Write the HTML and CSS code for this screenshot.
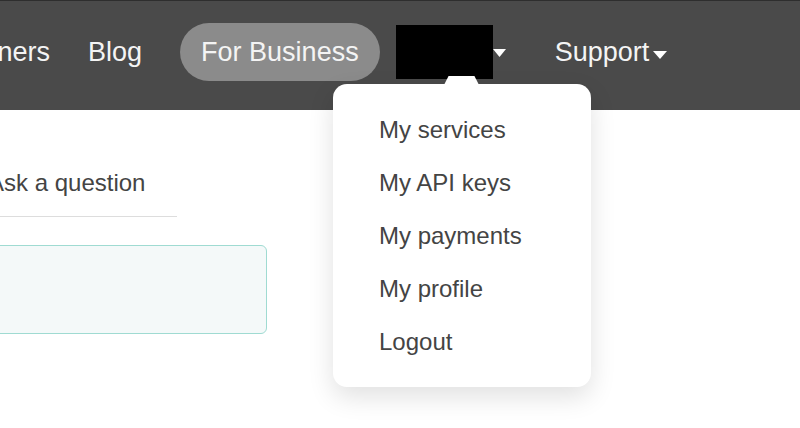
FILE: index.html
```html
<!DOCTYPE html>
<html lang="en">
<head>
  <meta charset="UTF-8">
  <meta name="viewport" content="width=device-width, initial-scale=1.0">
  <title>Account menu</title>
  <link rel="stylesheet" href="styles.css">
</head>
<body>

  <!-- Barra de navegación -->
  <header class="topbar">
    <nav class="nav">
      <a class="nav-link" href="#">Partners</a>
      <a class="nav-link" href="#">Blog</a>
      <a class="nav-pill" href="#">For Business</a>
      <a class="nav-user" href="#">
        <span class="user-name"></span>
        <svg class="caret" width="13" height="9" viewBox="0 0 13 9"><path d="M0 0 H13 L6.5 8 Z" fill="#fff"/></svg>
      </a>
      <a class="nav-link nav-support" href="#">Support<svg class="caret" width="14" height="9" viewBox="0 0 14 9"><path d="M0 0 H14 L7 8 Z" fill="#fff"/></svg></a>
    </nav>
  </header>

  <!-- Contenido -->
  <main class="content">
    <div class="tab">Ask a question</div>
    <div class="question-box"></div>
  </main>

  <!-- Menú desplegable del usuario -->
  <div class="dropdown">
    <span class="dropdown-notch"></span>
    <ul class="dropdown-list">
      <li><a href="#">My services</a></li>
      <li><a href="#">My API keys</a></li>
      <li><a href="#">My payments</a></li>
      <li><a href="#">My profile</a></li>
      <li><a href="#">Logout</a></li>
    </ul>
  </div>

</body>
</html>
```

FILE: styles.css
```css
/* Estilos generales */
body {
  font-family: "Liberation Sans", Arial, sans-serif;
  background-color: #ffffff;
  margin: 0;
  padding: 0;
  overflow: hidden;
  position: relative;
  height: 428px;
}

a {
  text-decoration: none;
  color: inherit;
}

/* Barra superior */
.topbar {
  background-color: #4a4a4a;
  border-top: 1px solid #2e2e2e;
  height: 109px;
}

.nav {
  display: flex;
  align-items: flex-start;
  padding-top: 22px;
  margin-left: -71px;
  color: #f4f4f4;
  font-size: 27px;
}

.nav-link {
  padding: 1px 19px 0;
  height: 57px;
  line-height: 57px;
}

.nav-pill {
  margin-left: 19px;
  padding: 1px 21px 0;
  height: 57px;
  line-height: 57px;
  background-color: #8b8b8b;
  border-radius: 29px;
}

.nav-user {
  display: flex;
  align-items: center;
  margin-left: 16px;
  height: 57px;
}

.user-name {
  display: block;
  width: 97px;
  height: 54px;
  margin-top: 1px;
  background-color: #000;
}

.nav-user .caret {
  margin-top: 3px;
}

.nav-support {
  margin-left: 30px;
  display: flex;
  align-items: center;
}

.nav-support .caret {
  margin-left: 4px;
  margin-top: 6px;
}

/* Contenido */
.content {
  margin-left: -12px;
  padding-top: 58px;
}

.tab {
  width: 189px;
  font-size: 24px;
  line-height: 30px;
  color: #444;
  padding-bottom: 18px;
  border-bottom: 1px solid #dddddd;
}

.question-box {
  margin-top: 28px;
  width: 277px;
  height: 87px;
  background-color: #f4f9f9;
  border: 1px solid #9fdbd2;
  border-radius: 6px;
}

/* Menú desplegable */
.dropdown {
  position: absolute;
  left: 333px;
  top: 84px;
  width: 258px;
  height: 303px;
  background-color: #ffffff;
  border-radius: 14px;
  box-shadow: 0 10px 26px rgba(0, 0, 0, 0.12);
}

.dropdown-notch {
  position: absolute;
  top: -8px;
  left: 111px;
  width: 35px;
  height: 9px;
  background-color: #ffffff;
  clip-path: polygon(13% 0, 87% 0, 100% 100%, 0 100%);
}

.dropdown-list {
  list-style: none;
  margin: 0;
  padding: 19px 0 0 46px;
}

.dropdown-list li {
  font-size: 24px;
  line-height: 53px;
  color: #444;
}
```
